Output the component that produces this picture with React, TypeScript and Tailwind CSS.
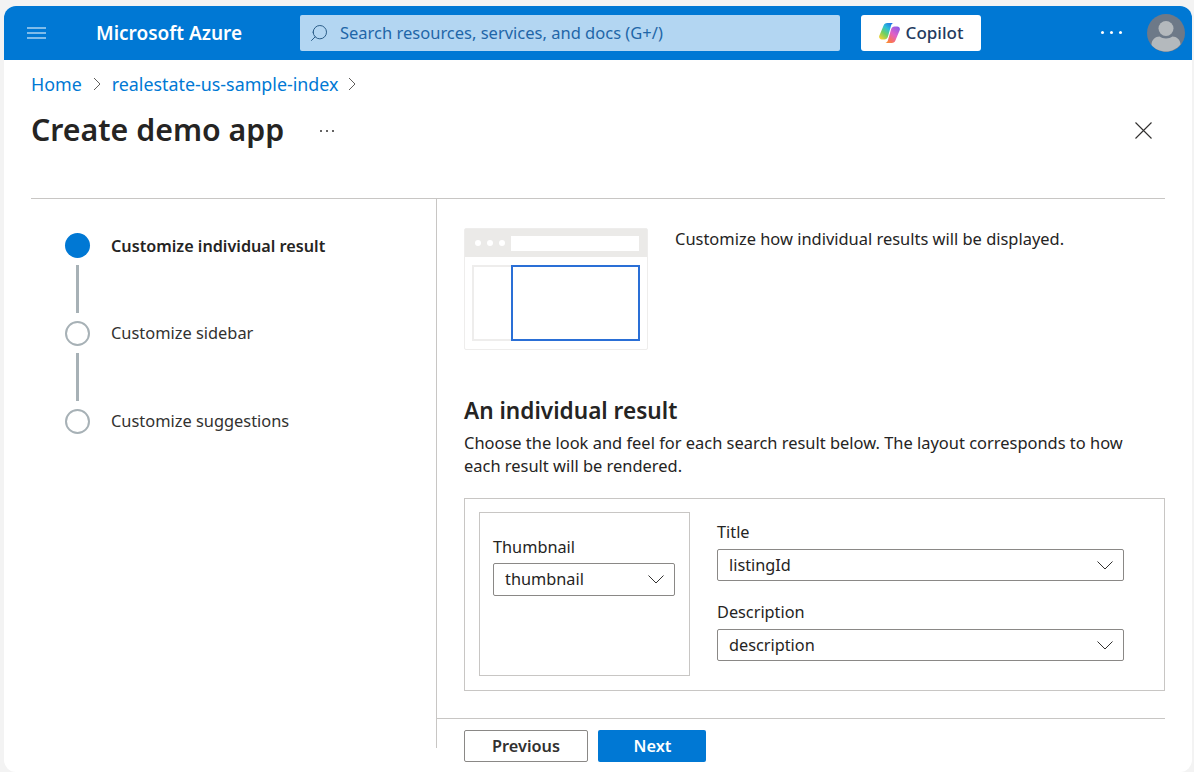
import { Search } from 'lucide-react';

const FONT = "font-['Noto_Sans',sans-serif]";

function CopilotLogo() {
  return (
    <svg width="21" height="20" viewBox="0 0 21 20">
      <defs>
        <linearGradient id="cpLeft" x1="0.85" y1="0" x2="0.15" y2="1">
          <stop offset="0" stopColor="#1f6fe8" />
          <stop offset="0.35" stopColor="#2cc0d8" />
          <stop offset="0.65" stopColor="#70d060" />
          <stop offset="1" stopColor="#f8d030" />
        </linearGradient>
        <linearGradient id="cpRight" x1="0.85" y1="0" x2="0.15" y2="1">
          <stop offset="0" stopColor="#8a5ce8" />
          <stop offset="0.45" stopColor="#e060c8" />
          <stop offset="0.8" stopColor="#f87060" />
          <stop offset="1" stopColor="#f89030" />
        </linearGradient>
      </defs>
      <path d="M4.500 2.800C5 1 6.500 0 8.200 0h6.300c-1.200.3-2 1.200-2.400 2.400L9 13.500c-.6 2-1.900 3-3.500 3H2.800C.8 16.500-.3 14.800.2 13z" fill="url(#cpLeft)" />
      <path d="M16.500 17.200c-.5 1.800-2 2.800-3.700 2.800H6.500c1.200-.3 2-1.200 2.400-2.400L12 6.500c.6-2 1.900-3 3.500-3h2.700c2 0 3.100 1.700 2.600 3.500z" fill="url(#cpRight)" />
    </svg>
  );
}

function Avatar() {
  return (
    <svg width="38" height="38" viewBox="0 0 38 38">
      <circle cx="19" cy="19" r="19" fill="#6d7988" />
      <circle cx="19" cy="14.500" r="7.500" fill="#b4b9bd" />
      <path d="M4.500 31c0-5.500 4-8.500 8-8.500 1.800 1.300 3.900 2 6.500 2s4.700-.7 6.500-2c4 0 8 3 8 8-3.500 4.300-8.800 7-14.500 7S8 35.300 4.500 31z" fill="#b4b9bd" />
    </svg>
  );
}

function Hamburger() {
  return (
    <svg width="19" height="12" viewBox="0 0 19 12" className="ml-[23px]">
      <path d="M0 1h19M0 6h19M0 11h19" stroke="#fff" strokeWidth="1" fill="none" />
    </svg>
  );
}

function BreadcrumbChevron({ className }: { className: string }) {
  return (
    <svg width="8" height="14" viewBox="0 0 8 14" className={className}>
      <path d="M1 1l6 6-6 6" stroke="#605e5c" strokeWidth="1" fill="none" />
    </svg>
  );
}

function CloseIcon() {
  return (
    <svg width="17" height="17" viewBox="0 0 17 17" className="ml-auto mr-[13px]">
      <path d="M.5.5l16 16M16.500.5l-16 16" stroke="#323130" strokeWidth="1.100" fill="none" />
    </svg>
  );
}

function Preview() {
  return (
    <div className="flex h-[122px] w-[184px] flex-col rounded-[2px] border border-[#eeedec] bg-white">
      <div className="flex h-[28px] shrink-0 items-center gap-[6px] bg-[#ebeae8] pl-[10px] pr-[8px]">
        <span className="size-[6px] rounded-full bg-white" />
        <span className="size-[6px] rounded-full bg-white" />
        <span className="size-[6px] rounded-full bg-white" />
        <span className="h-[15px] flex-1 bg-white" />
      </div>
      <div className="flex pl-[7px] pr-[7px] pt-[8px]">
        <div className="h-[76px] w-[39px] border-y-2 border-l-2 border-[#eeedec]" />
        <div className="h-[76px] flex-1 border-2 border-[#2a6fd6]" />
      </div>
    </div>
  );
}

function Step({ label, active }: { label: string; active?: boolean }) {
  return (
    <div className="flex h-[26px] items-center">
      <span
        className={
          active
            ? 'size-[25px] shrink-0 rounded-full bg-[#0078d4]'
            : 'size-[25px] shrink-0 rounded-full border-2 border-[#a7b1b6]'
        }
      />
      <span
        className={
          active
            ? 'ml-[21px] mt-[2px] text-[16.2px] font-semibold text-[#252423]'
            : 'ml-[21px] text-[16.4px] text-[#323130]'
        }
      >
        {label}
      </span>
    </div>
  );
}

function StepLine() {
  return <div className="my-[7px] ml-[11px] h-[48px] w-[3px] bg-[#a7b1b6]" />;
}

function Dropdown({ value, className }: { value: string; className: string }) {
  return (
    <div
      className={`flex items-center justify-between rounded-[2px] border border-[#8a8886] pl-[11px] pr-[10px] text-[16.3px] text-[#252423] ${className}`}
    >
      <span>{value}</span>
      <svg width="16" height="9" viewBox="0 0 16 9">
        <path d="M.5.5L8 8 15.500.5" stroke="#323130" strokeWidth="1" fill="none" />
      </svg>
    </div>
  );
}

export default function App() {
  return (
    <div className={`h-[772px] w-[1194px] overflow-hidden bg-[#f3f3f3] pl-[4px] pr-[2px] pt-[6px] ${FONT}`}>
      <div className="flex h-[766px] flex-col overflow-hidden rounded-[12px] bg-white">
        <header className="flex h-[54px] shrink-0 items-center bg-[#0078d4] text-white">
          <Hamburger />
          <span className="ml-[50px] w-[204px] text-[19px] font-semibold">Microsoft Azure</span>
          <div className="flex h-[36px] w-[540px] items-center rounded-[2px] bg-[#b3d6f2] pl-[9px] text-[#1f66a8]">
            <Search size={20} strokeWidth={1.2} className="-scale-x-100 text-[#2b5d88]" />
            <span className="ml-[11px] text-[16.5px]">Search resources, services, and docs (G+/)</span>
          </div>
          <div className="ml-[21px] flex h-[36px] w-[120px] items-center justify-center gap-[6px] rounded-[3px] bg-white text-[17px] font-medium text-[#243a5e]">
            <CopilotLogo />
            <span>Copilot</span>
          </div>
          <div className="ml-[120px] mt-[-2px] flex gap-[6px]">
            <span className="size-[3px] rounded-full bg-white" />
            <span className="size-[3px] rounded-full bg-white" />
            <span className="size-[3px] rounded-full bg-white" />
          </div>
          <div className="ml-[25px]">
            <Avatar />
          </div>
        </header>

        <div className="flex min-h-0 flex-1 flex-col pl-[27px] pr-[27px]">
          <nav className="mt-[12px] flex h-[24px] items-center text-[17.85px] text-[#0078d4]">
            <span>Home</span>
            <BreadcrumbChevron className="ml-[11px] mr-[11px]" />
            <span>realestate-us-sample-index</span>
            <BreadcrumbChevron className="ml-[10px]" />
          </nav>

          <div className="mt-[11px] flex h-[46px] items-center">
            <h1 className="text-[30.3px] font-semibold text-[#252423]">Create demo app</h1>
            <div className="ml-[36px] mt-[1px] flex gap-[4px]">
              <span className="size-[2px] rounded-full bg-[#323130]" />
              <span className="size-[2px] rounded-full bg-[#323130]" />
              <span className="size-[2px] rounded-full bg-[#323130]" />
            </div>
            <CloseIcon />
          </div>

          <div className="mt-[45px] flex min-h-0 flex-1 border-t border-[#c8c6c4]">
            <aside className="h-[549px] w-[406px] shrink-0 border-r border-[#c8c6c4] pl-[34px] pt-[33px]">
              <Step label="Customize individual result" active />
              <StepLine />
              <Step label="Customize sidebar" />
              <StepLine />
              <Step label="Customize suggestions" />
            </aside>

            <main className="flex-1 text-[#252423]">
              <div className="pl-[27px] pt-[29px]">
                <div className="flex">
                  <Preview />
                  <p className="ml-[27px] text-[16.45px] leading-[22px]">Customize how individual results will be displayed.</p>
                </div>

                <h2 className="mt-[47px] text-[22.6px] font-semibold leading-[28px]">An individual result</h2>
                <p className="mt-[6px] max-w-[680px] text-[16.45px] leading-[23px]">
                  Choose the look and feel for each search result below. The layout corresponds to how each result will be rendered.
                </p>

                <div className="mt-[21px] flex h-[193px] border border-[#c8c6c4] pl-[14px] pt-[13px]">
                  <div className="h-[164px] w-[211px] border border-[#c8c6c4] pl-[13px] pt-[23px]">
                    <div className="text-[16.3px] leading-[22px]">Thumbnail</div>
                    <Dropdown value="thumbnail" className="mt-[5px] h-[33px] w-[182px]" />
                  </div>
                  <div className="ml-[27px] w-[407px]">
                    <div className="mt-[9px] text-[16.3px] leading-[22px]">Title</div>
                    <Dropdown value="listingId" className="mt-[6px] h-[32px]" />
                    <div className="mt-[20px] text-[16.3px] leading-[22px]">Description</div>
                    <Dropdown value="description" className="mt-[6px] h-[32px]" />
                  </div>
                </div>
              </div>

              <div className="mt-[27px] flex gap-[10px] border-t border-[#c8c6c4] pl-[27px] pt-[11px]">
                <button className="h-[32px] w-[124px] rounded-[2px] border border-[#8a8886] pt-[1px] text-[16.3px] font-semibold text-[#323130]">
                  Previous
                </button>
                <button className="h-[32px] w-[108px] rounded-[2px] bg-[#0078d4] pl-[1px] pt-[1px] text-[16.3px] font-semibold text-white">
                  Next
                </button>
              </div>
            </main>
          </div>
        </div>
      </div>
    </div>
  );
}
